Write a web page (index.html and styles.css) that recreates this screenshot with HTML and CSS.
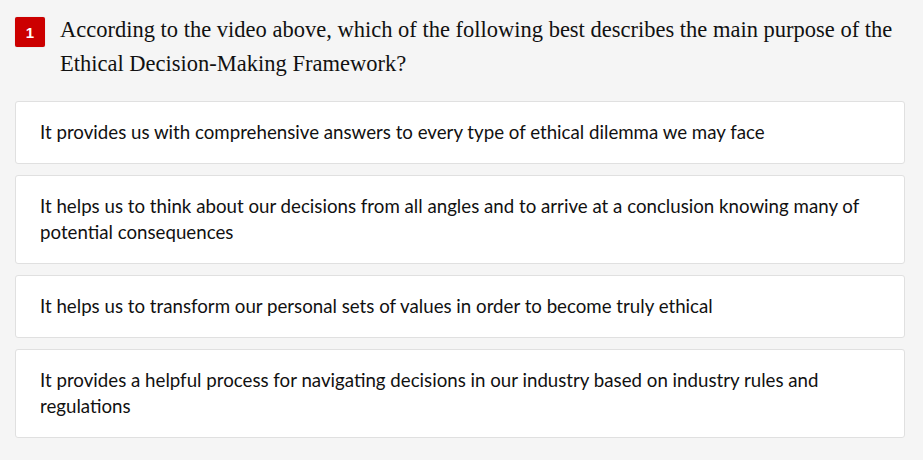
FILE: index.html
```html
<!DOCTYPE html>
<html>
<head>
<meta charset="utf-8">
<link rel="stylesheet" href="styles.css">
</head>
<body>
<div class="question">
  <div class="q-head">
    <span class="badge">1</span>
    <p class="q-text">According to the video above, which of the following best describes the main purpose of the Ethical Decision-Making Framework?</p>
  </div>
  <div class="options">
    <div class="option">It provides us with comprehensive answers to every type of ethical dilemma we may face</div>
    <div class="option">It helps us to think about our decisions from all angles and to arrive at a conclusion knowing many of potential consequences</div>
    <div class="option">It helps us to transform our personal sets of values in order to become truly ethical</div>
    <div class="option">It provides a helpful process for navigating decisions in our industry based on industry rules and regulations</div>
  </div>
</div>
</body>
</html>
```
FILE: styles.css
```css
html, body {
  margin: 0;
  padding: 0;
  background: #f5f5f5;
}
.question {
  padding: 13px 18px 0 15px;
}
.q-head {
  display: flex;
  align-items: flex-start;
  gap: 15px;
}
.badge {
  flex: none;
  width: 30px;
  height: 30px;
  margin-top: 4px;
  background: #cc0000;
  color: #fff;
  border-radius: 2px;
  box-shadow: 0 0 1px rgba(0, 0, 0, 0.25);
  font-family: "Liberation Sans", Arial, sans-serif;
  font-weight: bold;
  font-size: 15px;
  display: flex;
  align-items: center;
  justify-content: center;
}
.q-text {
  margin: 0;
  font-family: "Liberation Serif", "Times New Roman", serif;
  font-size: 22.5px;
  line-height: 34px;
  color: #111;
}
.options {
  display: flex;
  flex-direction: column;
  gap: 11px;
  margin-top: 20px;
}
.option {
  background: #fff;
  border: 1px solid #e0e0e0;
  border-radius: 3px;
  padding: 17px 24px 18px;
  font-family: "Lato", "Open Sans", sans-serif;
  font-size: 18.7px;
  line-height: 26px;
  color: #111;
}
```
